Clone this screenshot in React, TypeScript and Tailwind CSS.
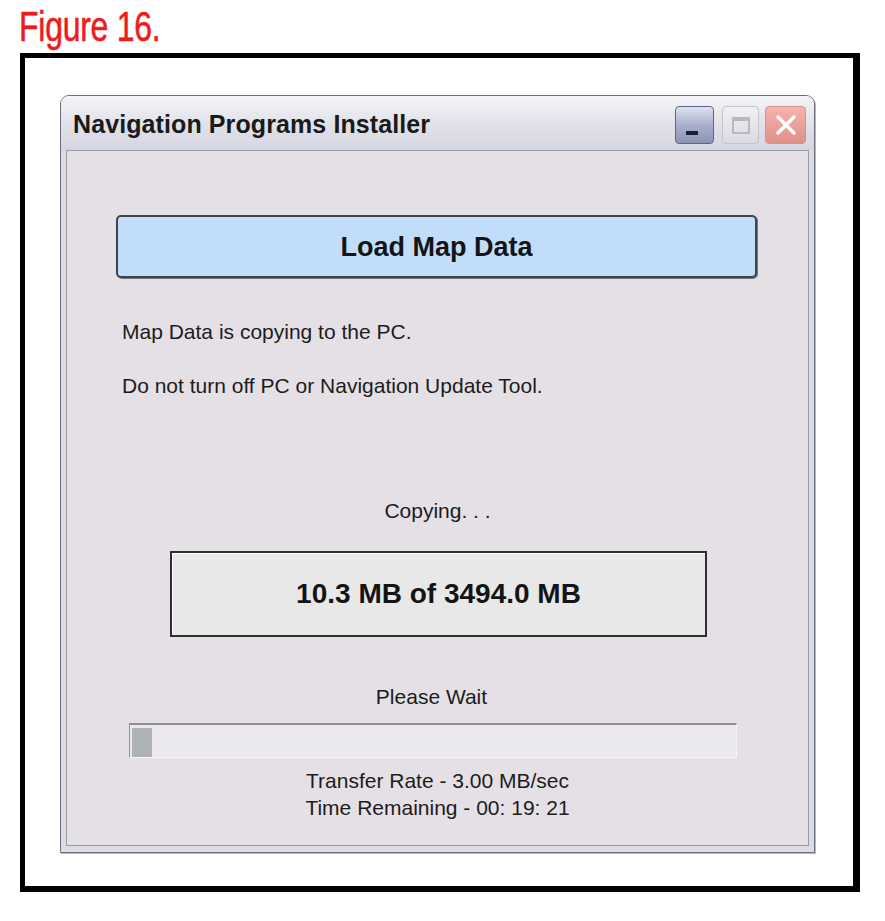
import React from "react";

export default function App() {
  return (
    <div className="w-[885px] h-[921px] bg-white font-['Liberation_Sans',Arial,sans-serif] text-[#1c1c1c]">
      <div className="h-[53px] pl-[19px] pt-[6px]">
        <div className="origin-left scale-x-[0.76] text-[42px] leading-[42px] text-[#f01c1c] tracking-[-0.3px] whitespace-nowrap [-webkit-text-stroke:0.6px_#f01c1c]">
          Figure 16.
        </div>
      </div>
      <div className="ml-[20px] w-[840px] h-[839px] border-l-[5px] border-t-[5px] border-r-[7px] border-b-[6px] border-black pl-[35px] pt-[37px]">
        {/* Window */}
        <div className="w-[755px] h-[758px] flex flex-col rounded-t-[9px] border border-[#6e6e7a] bg-[#dcdce6] shadow-[1px_1px_0_#b8b8c0]">
          {/* Title bar */}
          <div className="h-[54px] shrink-0 flex items-center pl-[12px] pr-[8px] rounded-t-[8px] bg-gradient-to-b from-[#f4f4f8] via-[#e2e2ea] to-[#d6d6e2]">
            <div className="flex-1 pt-[3px] text-[25px] font-bold tracking-[0.1px] text-[#1a1a1a] whitespace-nowrap">
              Navigation Programs Installer
            </div>
            <div className="flex items-center pt-[4px]">
              <div className="w-[39px] h-[38px] rounded-[4px] border border-[#5e6684] bg-gradient-to-b from-[#dfe2f0] via-[#aab0cc] to-[#8c94b4] flex items-end pl-[10px] pb-[8px]">
                <div className="w-[12px] h-[4px] bg-[#1e2230]" />
              </div>
              <div className="ml-[8px] w-[37px] h-[38px] rounded-[4px] border border-[#c4c4cc] bg-gradient-to-b from-[#f0f0f4] to-[#dadae2] flex items-center justify-center">
                <div className="w-[18px] h-[17px] border-2 border-[#b8b8c0] border-t-[4px]" />
              </div>
              <div className="ml-[6px] w-[41px] h-[38px] rounded-[4px] border border-[#d89088] bg-gradient-to-b from-[#f4b4ac] to-[#e0908a] flex items-center justify-center">
                <svg width="24" height="24" viewBox="0 0 24 24">
                  <path d="M4 4 L20 20 M20 4 L4 20" stroke="#ffffff" strokeWidth="3.5" strokeLinecap="round" />
                </svg>
              </div>
            </div>
          </div>
          {/* Client frame */}
          <div className="flex-1 px-[5px] pb-[6px]">
            <div className="h-full border border-[#9c9ca6] bg-[#e5e0e6] flex flex-col text-[21px] leading-[24px]">
              <div className="mt-[64px] ml-[49px] w-[641px] h-[63px] rounded-[5px] border-2 border-[#3a4648] bg-[#c2ddf9] flex items-center justify-center text-[27px] font-bold text-[#141414] shadow-[1px_1px_0_#6e7a7c]">
                Load Map Data
              </div>
              <div className="mt-[42px] ml-[55px] whitespace-nowrap">Map Data is copying to the PC.</div>
              <div className="mt-[30px] ml-[55px] whitespace-nowrap">Do not turn off PC or Navigation Update Tool.</div>
              <div className="mt-[101px] text-center">Copying. . .</div>
              <div className="mt-[28px] ml-[103px] w-[537px] h-[86px] border-2 border-[#2e2e2e] bg-[#e8e8e8] shadow-[inset_1px_1px_0_#ffffff] flex items-center justify-center text-[28px] font-bold text-[#141414]">
                10.3 MB of 3494.0 MB
              </div>
              <div className="mt-[48px] text-center pr-[12px]">Please Wait</div>
              <div className="mt-[14px] ml-[62px] w-[608px] h-[35px] border-t-2 border-l border-[#8e8e94] border-r border-b border-r-[#f6f4f8] border-b-[#f6f4f8] bg-[#ebe8ee] pl-[2px] pt-[3px]">
                <div className="w-[20px] h-[29px] bg-[#b0b3b6]" />
              </div>
              <div className="mt-[11px] text-center">Transfer Rate - 3.00 MB/sec</div>
              <div className="mt-[3px] text-center">Time Remaining - 00: 19: 21</div>
            </div>
          </div>
        </div>
      </div>
    </div>
  );
}
